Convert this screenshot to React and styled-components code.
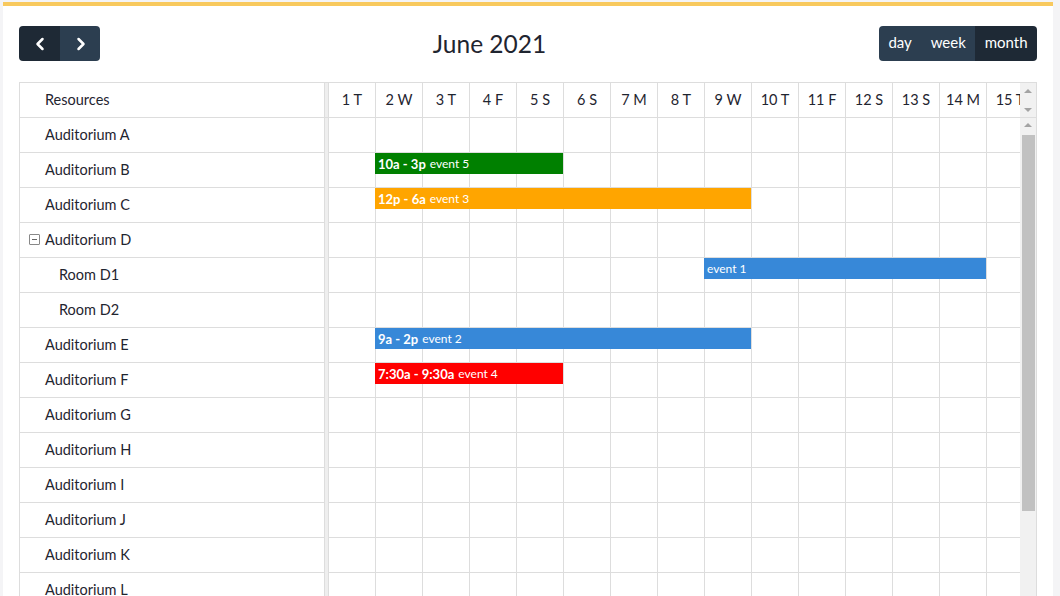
import React from "react";
import styled, { createGlobalStyle } from "styled-components";
import { ChevronLeft, ChevronRight } from "lucide-react";

const GlobalStyle = createGlobalStyle`
  html, body { margin: 0; padding: 0; }
  body {
    background: #f4f4f6;
    font-family: "Lato", "Noto Sans", sans-serif;
    color: #212529;
    overflow: hidden;
  }
`;

const DAY_W = 47;
const ROW_H = 35;

const days = ["T", "W", "T", "F", "S", "S", "M", "T", "W", "T", "F", "S", "S", "M", "T", "W", "T", "F"];

const resources = [
  { id: "a", title: "Auditorium A" },
  { id: "b", title: "Auditorium B" },
  { id: "c", title: "Auditorium C" },
  { id: "d", title: "Auditorium D", parent: true },
  { id: "d1", title: "Room D1", child: true },
  { id: "d2", title: "Room D2", child: true },
  { id: "e", title: "Auditorium E" },
  { id: "f", title: "Auditorium F" },
  { id: "g", title: "Auditorium G" },
  { id: "h", title: "Auditorium H" },
  { id: "i", title: "Auditorium I" },
  { id: "j", title: "Auditorium J" },
  { id: "k", title: "Auditorium K" },
  { id: "l", title: "Auditorium L" },
  { id: "m", title: "Auditorium M" },
];

const events = [
  { res: "b", start: 1, len: 4, time: "10a - 3p", title: "event 5", color: "#008000" },
  { res: "c", start: 1, len: 8, time: "12p - 6a", title: "event 3", color: "#ffa500" },
  { res: "d1", start: 8, len: 6, title: "event 1", color: "#3788d8" },
  { res: "e", start: 1, len: 8, time: "9a - 2p", title: "event 2", color: "#3788d8" },
  { res: "f", start: 1, len: 4, time: "7:30a - 9:30a", title: "event 4", color: "#ff0000" },
];

const Card = styled.div`
  margin: 2px 7px 0 3px;
  background: #fff;
  border-top: 4px solid #f8c95e;
  padding: 20px 16px 0 16px;
  height: 600px;
`;

const Toolbar = styled.div`
  display: flex;
  align-items: center;
  justify-content: space-between;
  height: 35px;
  margin-bottom: 21px;
`;

const ButtonGroup = styled.div`
  display: flex;
  border-radius: 4px;
  overflow: hidden;
  width: ${(p) => p.w}px;
`;

const Btn = styled.button`
  border: none;
  margin: 0;
  height: 35px;
  padding: 0 ${(p) => (p.icon ? 0 : 9)}px ${(p) => (p.icon ? 0 : 3)}px;
  width: ${(p) => (p.icon ? "41px" : "auto")};
  flex: ${(p) => (p.icon ? "none" : "auto")};
  display: flex;
  align-items: center;
  justify-content: center;
  background: ${(p) => (p.active ? "#1e2935" : "#2c3e50")};
  color: #fff;
  font-family: "Lato", sans-serif;
  font-size: 15px;
`;

const Title = styled.h2`
  margin: 0;
  font-size: 24.5px;
  font-weight: 400;
  color: #1f2530;
`;

const Table = styled.div`
  border: 1px solid #ddd;
  border-bottom: none;
`;

const Row = styled.div`
  display: flex;
  height: ${ROW_H - 1}px;
  border-bottom: 1px solid #ddd;
`;

const ResCell = styled.div`
  width: 305px;
  flex: none;
  display: flex;
  align-items: center;
  padding: 0 0 1px ${(p) => (p.child ? 39 : p.parent ? 9 : 25)}px;
  box-sizing: border-box;
  font-size: 14.5px;
  color: #1f2530;
  border-right: 1px solid #ddd;
`;

const Divider = styled.div`
  width: 3px;
  flex: none;
  background: #eee;
  border-right: 1px solid #ddd;
`;

const Body = styled.div`
  display: flex;
`;

const Column = styled.div`
  display: flex;
  flex-direction: column;
  flex: none;
`;

const Timeline = styled.div`
  width: 691px;
  flex: none;
  overflow: hidden;
`;

const HeadTimeline = styled(Timeline)`
  display: flex;
`;

const DayHead = styled.div`
  width: ${DAY_W}px;
  flex: none;
  box-sizing: border-box;
  border-right: 1px solid #ddd;
  display: flex;
  align-items: center;
  justify-content: center;
  padding-bottom: 1px;
  font-size: 14.5px;
  color: #1f2530;
  white-space: nowrap;
  overflow: hidden;
`;

const Lane = styled.div`
  position: relative;
  display: flex;
  height: ${ROW_H - 1}px;
  border-bottom: 1px solid #ddd;
`;

const LaneCell = styled.div`
  width: ${DAY_W}px;
  flex: none;
  box-sizing: border-box;
  border-right: 1px solid #ddd;
`;

const Event = styled.div`
  position: absolute;
  top: 0;
  height: 21px;
  background: ${(p) => p.color};
  color: #fff;
  display: flex;
  align-items: center;
  padding-left: 3px;
  box-sizing: border-box;
  white-space: nowrap;
  overflow: hidden;
  font-size: 12px;
`;

const EvTime = styled.b`
  font-size: 13px;
  font-weight: 700;
  margin-right: 4px;
`;

const HeadScroll = styled.div`
  width: 16px;
  flex: none;
  background: #f1f1f1;
  display: flex;
  flex-direction: column;
  align-items: center;
  justify-content: space-between;
  padding: 6px 0 5px;
  box-sizing: border-box;
`;

const Scrollbar = styled.div`
  width: 16px;
  flex: none;
  background: #f1f1f1;
  display: flex;
  flex-direction: column;
  align-items: center;
  padding-top: 5px;
  box-sizing: border-box;
`;

const Arrow = styled.div`
  width: 0;
  height: 0;
  border-left: 4px solid transparent;
  border-right: 4px solid transparent;
  ${(p) => (p.down ? "border-top: 4px solid #a3a3a3;" : "border-bottom: 4px solid #a3a3a3;")}
`;

const Thumb = styled.div`
  width: 13px;
  height: 376px;
  margin-top: 8px;
  background: #c1c1c1;
`;

const Expander = styled.span`
  width: 9px;
  height: 9px;
  border: 1px solid #888;
  border-radius: 1px;
  margin-right: 5px;
  position: relative;
  &::after {
    content: "";
    position: absolute;
    left: 2px;
    right: 2px;
    top: 4px;
    height: 1px;
    background: #666;
  }
`;

export default function App() {
  const cols = days.length;
  return (
    <>
      <GlobalStyle />
      <Card>
        <Toolbar>
          <ButtonGroup w={81}>
            <Btn icon active aria-label="prev">
              <ChevronLeft size={20} strokeWidth={3} />
            </Btn>
            <Btn icon aria-label="next">
              <ChevronRight size={20} strokeWidth={3} />
            </Btn>
          </ButtonGroup>
          <Title>June 2021</Title>
          <ButtonGroup w={158}>
            <Btn>day</Btn>
            <Btn>week</Btn>
            <Btn active>month</Btn>
          </ButtonGroup>
        </Toolbar>
        <Table>
          <Row>
            <ResCell>Resources</ResCell>
            <Divider />
            <HeadTimeline>
              {days.map((d, i) => (
                <DayHead key={i}>
                  {i + 1} {d}
                </DayHead>
              ))}
            </HeadTimeline>
            <HeadScroll>
              <Arrow />
              <Arrow down />
            </HeadScroll>
          </Row>
          <Body>
            <Column>
              {resources.map((r) => (
                <Row key={r.id}>
                  <ResCell child={r.child} parent={r.parent}>
                    {r.parent && <Expander />}
                    {r.title}
                  </ResCell>
                </Row>
              ))}
            </Column>
            <Divider />
            <Timeline>
              {resources.map((r) => (
                <Lane key={r.id}>
                  {Array.from({ length: cols }).map((_, i) => (
                    <LaneCell key={i} />
                  ))}
                  {events
                    .filter((e) => e.res === r.id)
                    .map((e) => (
                      <Event
                        key={e.title}
                        color={e.color}
                        style={{ left: e.start * DAY_W - 1, width: e.len * DAY_W }}
                      >
                        {e.time && <EvTime>{e.time}</EvTime>}
                        {e.title}
                      </Event>
                    ))}
                </Lane>
              ))}
            </Timeline>
            <Scrollbar>
              <Arrow />
              <Thumb />
            </Scrollbar>
          </Body>
        </Table>
      </Card>
    </>
  );
}
